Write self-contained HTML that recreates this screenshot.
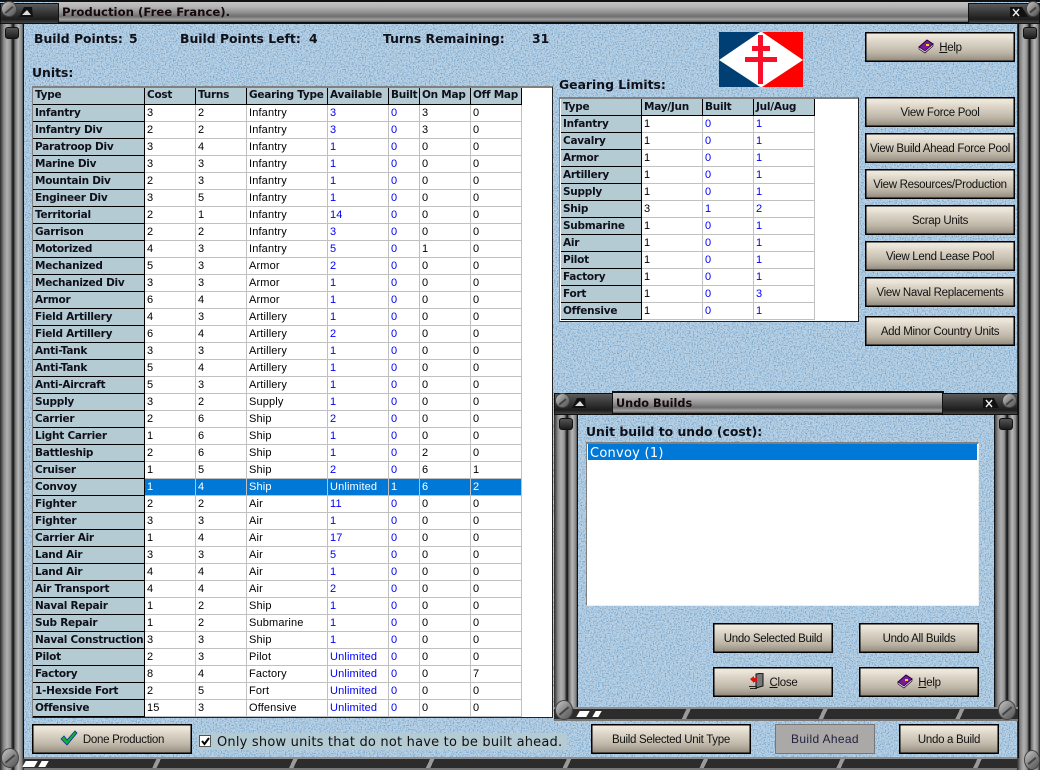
<!DOCTYPE html>
<html><head><meta charset="utf-8"><style>
html,body{margin:0;padding:0}
body{width:1040px;height:770px;position:relative;overflow:hidden;background:#b0cce0;font-family:"Liberation Sans",sans-serif;color:#000}
.a{position:absolute}
.noise{position:absolute;left:0;top:0}
.h{position:absolute;font:bold 12.4px "DejaVu Sans",sans-serif;color:#101018;white-space:pre}
.btn{position:absolute;box-sizing:border-box;border:1px solid #000;box-shadow:inset 0 0 0 .5px #000;background:linear-gradient(#f1ebe0 0,#eae3d7 15%,#dcd5c8 30%,#cec7b9 50%,#bdb5a6 70%,#a9a193 85%,#8f8779 100%);font:11.5px/30px "Liberation Sans",sans-serif;letter-spacing:-.3px;text-align:center;white-space:nowrap;color:#111}
.btn u{text-decoration:underline}
.btn svg{vertical-align:middle;margin-right:5px;margin-top:-3px}
.frame{position:absolute;background:#fff;box-sizing:border-box;border-style:solid;border-width:2px 1px 1px 1px;border-color:#808080 #222 #222 #808080}
table{border-collapse:separate;border-spacing:0;table-layout:fixed;position:absolute;background:#fff}
td,th{height:16px;padding:0 0 0 2px;box-sizing:content-box;border-right:1px solid #c0c0c0;border-bottom:1px solid #c0c0c0;font:11px/16px "Liberation Sans",sans-serif;text-align:left;white-space:nowrap;overflow:hidden;color:#000;letter-spacing:.15px}
th{background:#b4cbd3;border-right:1px solid #000;border-bottom:1px solid #000;font:bold 10.5px/16px "DejaVu Sans",sans-serif;letter-spacing:-.25px;color:#10101a}
table.u thead th{height:14px;line-height:14px;padding-bottom:2px}
td.b{color:#0000f8}
tr.s td{background:#0078d7;color:#fff}
.vpipe{position:absolute;background:linear-gradient(90deg,#2a2a2a 0,#5a5a5a 8%,#8a8a8a 16%,#b0b0b0 30%,#8e8e8e 44%,#3a3a3a 50%,#111 56%,#6e6e6e 62%,#b8b8b8 76%,#888 90%,#222 100%)}
.tbar{position:absolute;background:linear-gradient(#c4c4c4 0,#b4b4b4 25%,#8c8c8c 55%,#6e6e6e 72%,#a0a0a0 88%,#555 100%);border-top:2px solid #111;border-bottom:2px solid #111;box-sizing:border-box}
.tblock{position:absolute;background:linear-gradient(#5a5a5a 0,#3a3a3a 40%,#1c1c1c 80%,#444 100%);border:1px solid #111;box-sizing:border-box}
.ttl{position:absolute;font:bold 11.7px "DejaVu Sans",sans-serif;color:#180810;white-space:pre}
.bbar{position:absolute;background:repeating-linear-gradient(115deg,#2c2c2c 0,#2c2c2c 120px,#9a9a9a 120px,#9a9a9a 124px);border-top:2px solid #8e8e8e;border-bottom:2px solid #777;box-sizing:border-box}
.screw{position:absolute;border-radius:50%;background:linear-gradient(135deg,#c8c8c8,#7a7a7a 60%,#555);border:1px solid #444;box-sizing:border-box}
.screw:after{content:"";position:absolute;left:2px;right:2px;top:50%;height:2px;background:#444;transform:rotate(-40deg)}
.knob{position:absolute;border-radius:3px;background:linear-gradient(#555,#1c1c1c);border:1px solid #111;box-sizing:border-box}
</style></head><body>
<svg class="noise" width="1040" height="770"><filter id="n" x="0" y="0" width="100%" height="100%" color-interpolation-filters="sRGB"><feTurbulence type="fractalNoise" baseFrequency="0.75" numOctaves="2" seed="4"/><feColorMatrix values="0 0 0 0 .42 0 0 0 0 .60 0 0 0 0 .75 0 0 0 3 -1.35"/></filter><rect width="1040" height="770" fill="#bad3e7"/><rect width="1040" height="770" filter="url(#n)"/></svg>

<!-- outer frame -->
<div class="vpipe" style="left:0;top:24px;width:24px;height:746px"></div>
<div class="vpipe" style="left:1017px;top:24px;width:23px;height:746px"></div>
<div class="a" style="left:23px;top:23px;width:1px;height:735px;background:#111"></div>
<div class="a" style="left:1018px;top:23px;width:1px;height:735px;background:#111"></div>
<div class="knob" style="left:5px;top:27px;width:14px;height:12px"></div>
<div class="knob" style="left:1023px;top:27px;width:14px;height:12px"></div>
<div class="tbar" style="left:58px;top:0;width:912px;height:24px"></div>
<div class="tblock" style="left:0;top:3px;width:59px;height:21px"></div>
<div class="tblock" style="left:968px;top:3px;width:72px;height:21px"></div>
<div class="a" style="left:0;top:0;width:1040px;height:2px;background:#111"></div>
<div class="screw" style="left:1px;top:1px;width:16px;height:16px"></div>
<div class="screw" style="left:1026px;top:1px;width:14px;height:16px"></div>
<svg class="a" style="left:18px;top:6px" width="16" height="13"><path d="M1 11L6 1H14L15 11Z" fill="#111"/><path d="M4 9L9 4L13 9Z" fill="#ddd"/></svg>
<svg class="a" style="left:1009px;top:6px" width="20" height="13"><path d="M1 1H13L19 11H1Z" fill="#111"/><path d="M4 3L10 10M10 3L4 10" stroke="#eee" stroke-width="1.4"/></svg>
<div class="ttl" style="left:62px;top:5px">Production (Free France).</div>
<div class="bbar" style="left:24px;top:757px;width:993px;height:13px"></div>
<div class="a" style="left:24px;top:761px;width:12px;height:6px;background:#fff;transform:skewX(-30deg)"></div>
<div class="a" style="left:40px;top:761px;width:7px;height:6px;background:#fff;transform:skewX(-30deg)"></div>
<div class="screw" style="left:1px;top:748px;width:18px;height:20px"></div>
<div class="screw" style="left:1024px;top:750px;width:16px;height:20px"></div>

<div class="h" style="left:34px;top:31px">Build Points:</div>
<div class="h" style="left:129px;top:31px">5</div>
<div class="h" style="left:180px;top:31px">Build Points Left:</div>
<div class="h" style="left:309px;top:31px">4</div>
<div class="h" style="left:383px;top:31px">Turns Remaining:</div>
<div class="h" style="left:532px;top:31px">31</div>
<div class="h" style="left:32px;top:65px">Units:</div>
<div class="h" style="left:559px;top:77px">Gearing Limits:</div>

<!-- flag -->
<svg class="a" style="left:719px;top:32px" width="84" height="55"><rect width="42" height="55" fill="#003f73"/><rect x="42" width="42" height="55" fill="#f00"/><path d="M0 28L41 0H43L84 28L43 55H41Z" fill="#fff"/><path d="M39 3h5v49h-5zM33 14h18v5H33zM26 25h32v5H26z" fill="#f8102a"/></svg>

<!-- units table -->
<div class="frame" style="left:32px;top:86px;width:521px;height:632px"></div>
<table class="u" style="left:33px;top:88px;width:489px">
<colgroup><col style="width:112px"><col style="width:51px"><col style="width:51px"><col style="width:81px"><col style="width:61px"><col style="width:31px"><col style="width:51px"><col style="width:51px"></colgroup>
<thead><tr><th>Type</th><th>Cost</th><th>Turns</th><th>Gearing Type</th><th>Available</th><th>Built</th><th>On Map</th><th>Off Map</th></tr></thead>
<tbody>
<tr><th>Infantry</th><td>3</td><td>2</td><td>Infantry</td><td class="b">3</td><td class="b">0</td><td>3</td><td>0</td></tr>
<tr><th>Infantry Div</th><td>2</td><td>2</td><td>Infantry</td><td class="b">3</td><td class="b">0</td><td>3</td><td>0</td></tr>
<tr><th>Paratroop Div</th><td>3</td><td>4</td><td>Infantry</td><td class="b">1</td><td class="b">0</td><td>0</td><td>0</td></tr>
<tr><th>Marine Div</th><td>3</td><td>3</td><td>Infantry</td><td class="b">1</td><td class="b">0</td><td>0</td><td>0</td></tr>
<tr><th>Mountain Div</th><td>2</td><td>3</td><td>Infantry</td><td class="b">1</td><td class="b">0</td><td>0</td><td>0</td></tr>
<tr><th>Engineer Div</th><td>3</td><td>5</td><td>Infantry</td><td class="b">1</td><td class="b">0</td><td>0</td><td>0</td></tr>
<tr><th>Territorial</th><td>2</td><td>1</td><td>Infantry</td><td class="b">14</td><td class="b">0</td><td>0</td><td>0</td></tr>
<tr><th>Garrison</th><td>2</td><td>2</td><td>Infantry</td><td class="b">3</td><td class="b">0</td><td>0</td><td>0</td></tr>
<tr><th>Motorized</th><td>4</td><td>3</td><td>Infantry</td><td class="b">5</td><td class="b">0</td><td>1</td><td>0</td></tr>
<tr><th>Mechanized</th><td>5</td><td>3</td><td>Armor</td><td class="b">2</td><td class="b">0</td><td>0</td><td>0</td></tr>
<tr><th>Mechanized Div</th><td>3</td><td>3</td><td>Armor</td><td class="b">1</td><td class="b">0</td><td>0</td><td>0</td></tr>
<tr><th>Armor</th><td>6</td><td>4</td><td>Armor</td><td class="b">1</td><td class="b">0</td><td>0</td><td>0</td></tr>
<tr><th>Field Artillery</th><td>4</td><td>3</td><td>Artillery</td><td class="b">1</td><td class="b">0</td><td>0</td><td>0</td></tr>
<tr><th>Field Artillery</th><td>6</td><td>4</td><td>Artillery</td><td class="b">2</td><td class="b">0</td><td>0</td><td>0</td></tr>
<tr><th>Anti-Tank</th><td>3</td><td>3</td><td>Artillery</td><td class="b">1</td><td class="b">0</td><td>0</td><td>0</td></tr>
<tr><th>Anti-Tank</th><td>5</td><td>4</td><td>Artillery</td><td class="b">1</td><td class="b">0</td><td>0</td><td>0</td></tr>
<tr><th>Anti-Aircraft</th><td>5</td><td>3</td><td>Artillery</td><td class="b">1</td><td class="b">0</td><td>0</td><td>0</td></tr>
<tr><th>Supply</th><td>3</td><td>2</td><td>Supply</td><td class="b">1</td><td class="b">0</td><td>0</td><td>0</td></tr>
<tr><th>Carrier</th><td>2</td><td>6</td><td>Ship</td><td class="b">2</td><td class="b">0</td><td>0</td><td>0</td></tr>
<tr><th>Light Carrier</th><td>1</td><td>6</td><td>Ship</td><td class="b">1</td><td class="b">0</td><td>0</td><td>0</td></tr>
<tr><th>Battleship</th><td>2</td><td>6</td><td>Ship</td><td class="b">1</td><td class="b">0</td><td>2</td><td>0</td></tr>
<tr><th>Cruiser</th><td>1</td><td>5</td><td>Ship</td><td class="b">2</td><td class="b">0</td><td>6</td><td>1</td></tr>
<tr class="s"><th>Convoy</th><td>1</td><td>4</td><td>Ship</td><td>Unlimited</td><td>1</td><td>6</td><td>2</td></tr>
<tr><th>Fighter</th><td>2</td><td>2</td><td>Air</td><td class="b">11</td><td class="b">0</td><td>0</td><td>0</td></tr>
<tr><th>Fighter</th><td>3</td><td>3</td><td>Air</td><td class="b">1</td><td class="b">0</td><td>0</td><td>0</td></tr>
<tr><th>Carrier Air</th><td>1</td><td>4</td><td>Air</td><td class="b">17</td><td class="b">0</td><td>0</td><td>0</td></tr>
<tr><th>Land Air</th><td>3</td><td>3</td><td>Air</td><td class="b">5</td><td class="b">0</td><td>0</td><td>0</td></tr>
<tr><th>Land Air</th><td>4</td><td>4</td><td>Air</td><td class="b">1</td><td class="b">0</td><td>0</td><td>0</td></tr>
<tr><th>Air Transport</th><td>4</td><td>4</td><td>Air</td><td class="b">2</td><td class="b">0</td><td>0</td><td>0</td></tr>
<tr><th>Naval Repair</th><td>1</td><td>2</td><td>Ship</td><td class="b">1</td><td class="b">0</td><td>0</td><td>0</td></tr>
<tr><th>Sub Repair</th><td>1</td><td>2</td><td>Submarine</td><td class="b">1</td><td class="b">0</td><td>0</td><td>0</td></tr>
<tr><th>Naval Construction</th><td>3</td><td>3</td><td>Ship</td><td class="b">1</td><td class="b">0</td><td>0</td><td>0</td></tr>
<tr><th>Pilot</th><td>2</td><td>3</td><td>Pilot</td><td class="b">Unlimited</td><td class="b">0</td><td>0</td><td>0</td></tr>
<tr><th>Factory</th><td>8</td><td>4</td><td>Factory</td><td class="b">Unlimited</td><td class="b">0</td><td>0</td><td>7</td></tr>
<tr><th>1-Hexside Fort</th><td>2</td><td>5</td><td>Fort</td><td class="b">Unlimited</td><td class="b">0</td><td>0</td><td>0</td></tr>
<tr><th>Offensive</th><td>15</td><td>3</td><td>Offensive</td><td class="b">Unlimited</td><td class="b">0</td><td>0</td><td>0</td></tr>
</tbody></table>

<!-- gearing table -->
<div class="frame" style="left:559px;top:97px;width:300px;height:225px"></div>
<table style="left:561px;top:99px;width:254px">
<colgroup><col style="width:81px"><col style="width:61px"><col style="width:51px"><col style="width:61px"></colgroup>
<thead><tr><th>Type</th><th>May/Jun</th><th>Built</th><th>Jul/Aug</th></tr></thead>
<tbody>
<tr><th>Infantry</th><td>1</td><td class="b">0</td><td class="b">1</td></tr>
<tr><th>Cavalry</th><td>1</td><td class="b">0</td><td class="b">1</td></tr>
<tr><th>Armor</th><td>1</td><td class="b">0</td><td class="b">1</td></tr>
<tr><th>Artillery</th><td>1</td><td class="b">0</td><td class="b">1</td></tr>
<tr><th>Supply</th><td>1</td><td class="b">0</td><td class="b">1</td></tr>
<tr><th>Ship</th><td>3</td><td class="b">1</td><td class="b">2</td></tr>
<tr><th>Submarine</th><td>1</td><td class="b">0</td><td class="b">1</td></tr>
<tr><th>Air</th><td>1</td><td class="b">0</td><td class="b">1</td></tr>
<tr><th>Pilot</th><td>1</td><td class="b">0</td><td class="b">1</td></tr>
<tr><th>Factory</th><td>1</td><td class="b">0</td><td class="b">1</td></tr>
<tr><th>Fort</th><td>1</td><td class="b">0</td><td class="b">3</td></tr>
<tr><th>Offensive</th><td>1</td><td class="b">0</td><td class="b">1</td></tr>
</tbody></table>

<!-- right buttons -->
<div class="btn" style="left:865px;top:32px;width:150px;height:30px"><svg width="16" height="16" viewBox="0 0 16 16"><path d="M1 9L9 2L15 6L7 14Z" fill="#7a1a9a" stroke="#200030"/><path d="M1 9L1 11L7 15L15 8L15 6L7 13Z" fill="#e8e0f0" stroke="#200030" stroke-width=".7"/><path d="M8 6h3v2H8z" fill="#f0d020"/></svg><u>H</u>elp</div>
<div class="btn" style="left:865px;top:97px;width:150px;height:30px">View Force Pool</div>
<div class="btn" style="left:865px;top:133px;width:150px;height:30px">View Build Ahead Force Pool</div>
<div class="btn" style="left:865px;top:169px;width:150px;height:30px">View Resources/Production</div>
<div class="btn" style="left:865px;top:205px;width:150px;height:30px">Scrap Units</div>
<div class="btn" style="left:865px;top:241px;width:150px;height:30px">View Lend Lease Pool</div>
<div class="btn" style="left:865px;top:277px;width:150px;height:30px">View Naval Replacements</div>
<div class="btn" style="left:865px;top:316px;width:150px;height:30px">Add Minor Country Units</div>

<!-- undo window -->
<div class="vpipe" style="left:554px;top:415px;width:24px;height:295px"></div>
<div class="vpipe" style="left:994px;top:415px;width:24px;height:295px"></div>
<div class="knob" style="left:559px;top:418px;width:14px;height:12px"></div>
<div class="knob" style="left:999px;top:418px;width:14px;height:12px"></div>
<div class="tbar" style="left:612px;top:391px;width:332px;height:24px"></div>
<div class="tblock" style="left:554px;top:393px;width:59px;height:22px"></div>
<div class="tblock" style="left:942px;top:393px;width:76px;height:22px"></div>
<div class="screw" style="left:555px;top:393px;width:15px;height:15px"></div>
<div class="screw" style="left:1002px;top:393px;width:15px;height:15px"></div>
<svg class="a" style="left:571px;top:397px" width="16" height="13"><path d="M1 11L6 1H14L15 11Z" fill="#111"/><path d="M4 9L9 4L13 9Z" fill="#ddd"/></svg>
<svg class="a" style="left:982px;top:397px" width="18" height="13"><path d="M1 1H12L17 11H1Z" fill="#111"/><path d="M4 3L10 10M10 3L4 10" stroke="#eee" stroke-width="1.4"/></svg>
<div class="ttl" style="left:616px;top:397px;font-size:11.3px">Undo Builds</div>
<div class="a" style="left:577px;top:415px;width:1px;height:293px;background:#111"></div>
<div class="a" style="left:994px;top:415px;width:1px;height:293px;background:#111"></div>
<div class="h" style="left:586px;top:424px">Unit build to undo (cost):</div>
<div class="frame" style="left:586px;top:442px;width:393px;height:164px;border-color:#808080 #eee #eee #808080"></div>
<div class="a" style="left:588px;top:444px;width:389px;height:16px;background:#0078d7;color:#fff;font:13px/19px 'DejaVu Sans',sans-serif;letter-spacing:.25px;padding-left:2px;box-sizing:border-box;overflow:hidden">Convoy (1)</div>
<div class="btn" style="left:713px;top:623px;width:120px;height:30px">Undo Selected Build</div>
<div class="btn" style="left:859px;top:623px;width:120px;height:30px">Undo All Builds</div>
<div class="btn" style="left:713px;top:667px;width:120px;height:30px"><svg width="16" height="16" viewBox="0 0 16 16"><path d="M7 1L14 0V13L7 15Z" fill="#777" stroke="#111"/><path d="M1 6L5 3V5H8V9H5V10Z" fill="#e01010"/><path d="M0 13h8v1H0zM1 15h7v1H1z" fill="#222"/></svg><u>C</u>lose</div>
<div class="btn" style="left:859px;top:667px;width:120px;height:30px"><svg width="16" height="16" viewBox="0 0 16 16"><path d="M1 9L9 2L15 6L7 14Z" fill="#7a1a9a" stroke="#200030"/><path d="M1 9L1 11L7 15L15 8L15 6L7 13Z" fill="#e8e0f0" stroke="#200030" stroke-width=".7"/><path d="M8 6h3v2H8z" fill="#f0d020"/></svg><u>H</u>elp</div>
<div class="bbar" style="left:554px;top:707px;width:464px;height:14px"></div>
<div class="a" style="left:578px;top:711px;width:10px;height:6px;background:#fff;transform:skewX(-30deg)"></div>
<div class="a" style="left:594px;top:711px;width:6px;height:6px;background:#fff;transform:skewX(-30deg)"></div>
<div class="screw" style="left:998px;top:700px;width:18px;height:20px"></div>
<div class="screw" style="left:555px;top:700px;width:18px;height:20px"></div>

<!-- bottom row -->
<div class="btn" style="left:32px;top:724px;width:160px;height:30px"><svg width="18" height="16" viewBox="0 0 18 16"><path d="M1 9L4 6L7 10L15 1L17 3L7 15Z" fill="#10b030" stroke="#1030a0" stroke-width=".8"/></svg>Done Production</div>
<div class="a" style="left:197px;top:733px;width:370px;height:17px;background:#b4cbd3"></div>
<div class="a" style="left:199px;top:735px;width:12px;height:12px;background:#fff;border:1px solid #555;box-sizing:border-box"><svg class="a" style="left:1px;top:1px" width="9" height="9"><path d="M1 4L3.5 7L8 1" fill="none" stroke="#000" stroke-width="2"/></svg></div>
<div class="a" style="left:217px;top:735px;font:13px/15px 'DejaVu Sans',sans-serif;color:#111;white-space:nowrap;letter-spacing:.2px">Only show units that do not have to be built ahead.</div>
<div class="btn" style="left:591px;top:724px;width:160px;height:30px">Build Selected Unit Type</div>
<div class="btn" style="left:775px;top:724px;width:100px;height:30px;border-color:#777;box-shadow:none;background:#aaa9a8;color:#222240;font-size:12px;line-height:28px;letter-spacing:.35px">Build Ahead</div>
<div class="btn" style="left:899px;top:724px;width:100px;height:30px">Undo a Build</div>
</body></html>
